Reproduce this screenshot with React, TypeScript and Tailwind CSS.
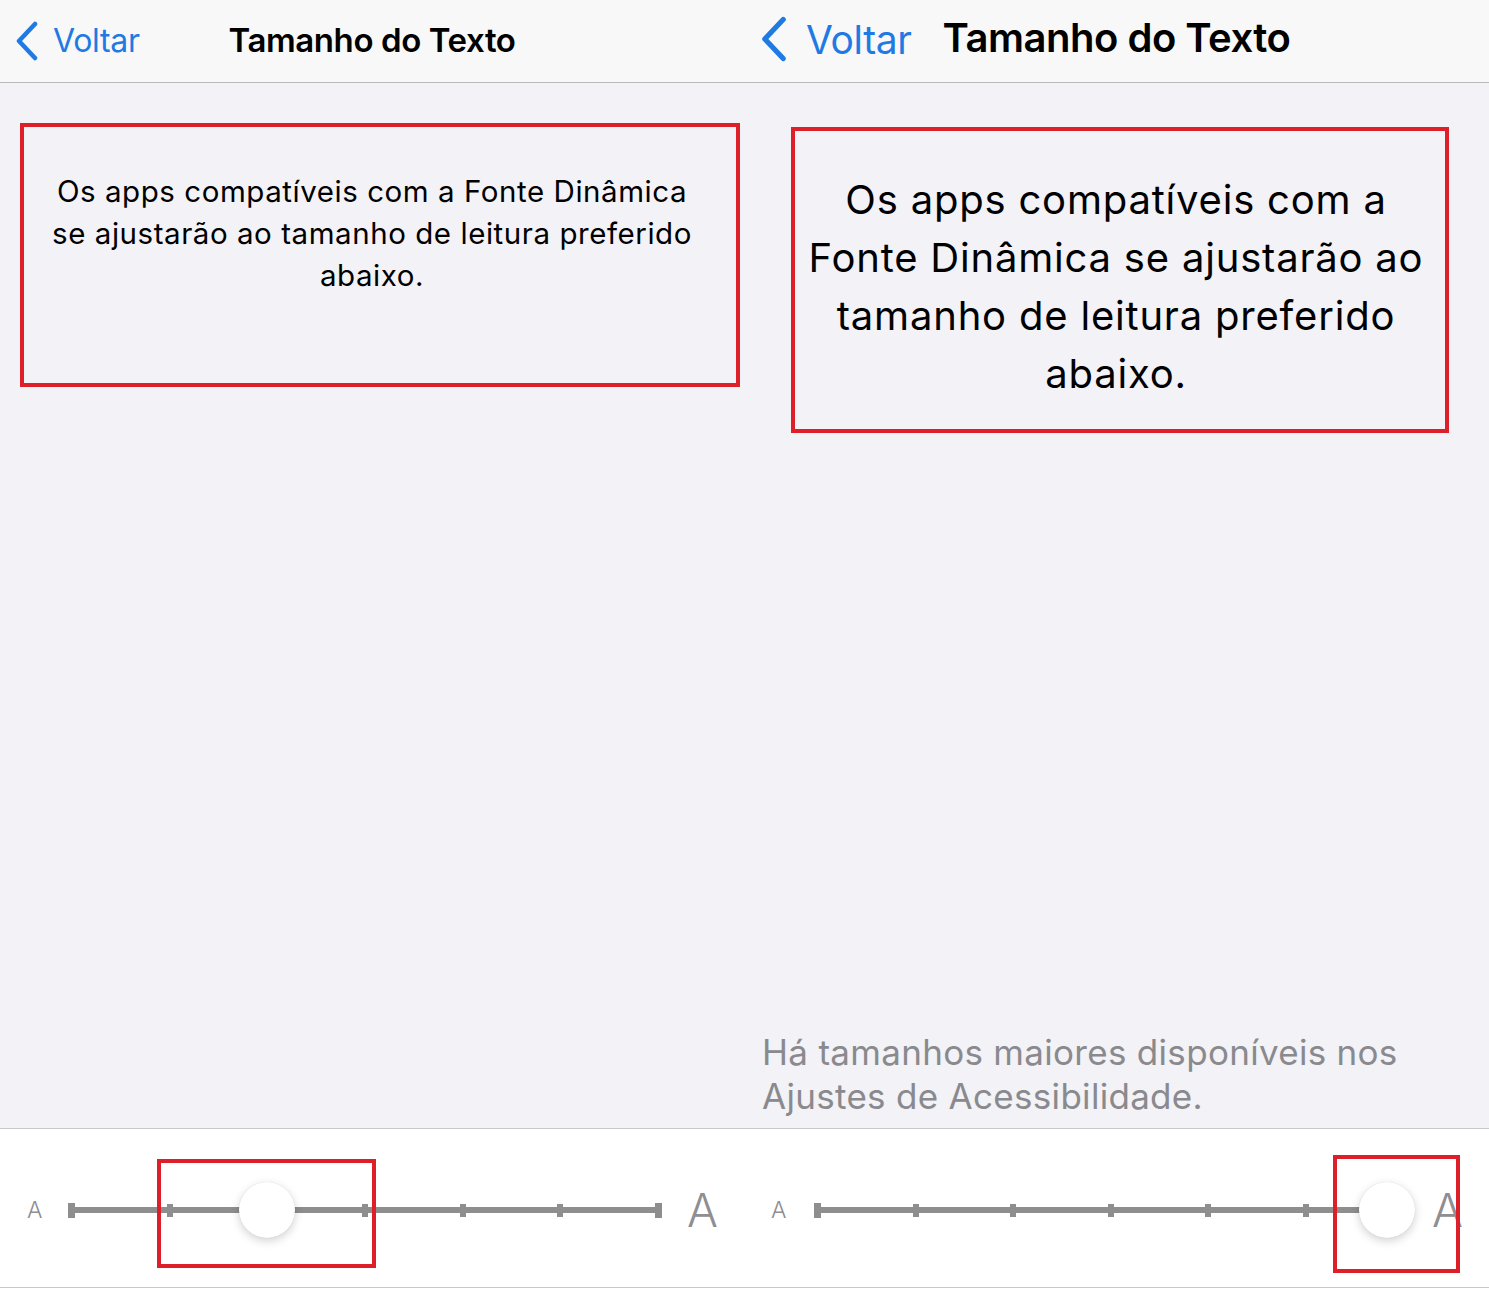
import React from "react";

const font = { fontFamily: "Inter, 'Noto Sans', sans-serif" };

function Chevron({ className }: { className?: string }) {
  return (
    <svg className={className} viewBox="0 0 24 40" fill="none" stroke="currentColor" strokeWidth={4.5} strokeLinecap="round" strokeLinejoin="round">
      <polyline points="20,3 4,20 20,37" />
    </svg>
  );
}

function Track({ positions }: { positions: number }) {
  const items: React.ReactNode[] = [];
  for (let i = 0; i < positions; i++) {
    const end = i === 0 || i === positions - 1;
    items.push(
      <div key={`t${i}`} className={end ? "w-[7px] h-[15px] bg-[#8e8e8e] shrink-0" : "w-[6px] h-[13px] bg-[#8e8e8e] shrink-0"} />
    );
    if (i < positions - 1) items.push(<div key={`s${i}`} className="flex-1 h-[6px] bg-[#8e8e8e]" />);
  }
  return <div className="flex items-center w-full">{items}</div>;
}

function Thumb() {
  return <div className="w-[56px] h-[56px] rounded-full bg-white shadow-[0_3px_10px_rgba(0,0,0,0.18),0_0_1px_rgba(0,0,0,0.15)]" />;
}

export default function App() {
  return (
    <div className="flex w-[1489px] h-[1291px] overflow-hidden bg-white" style={font}>
      {/* Left screen */}
      <section className="w-[744px] h-full flex flex-col">
        <header className="h-[83px] shrink-0 bg-[#f8f8f8] border-b border-[#b9b9bc] grid grid-cols-[1fr_auto_1fr] items-center">
          <div className="flex items-center pl-[15px] gap-[14px] text-[#1f7ae3]">
            <Chevron className="w-[24px] h-[40px]" />
            <span className="text-[32px] leading-none tracking-[-0.3px]">Voltar</span>
          </div>
          <h1 className="text-[33px] font-semibold text-black leading-none tracking-[-0.4px] -mt-[2px]">Tamanho do Texto</h1>
          <div />
        </header>

        <main className="flex-1 bg-[#f2f2f7] pt-[40px] pl-[20px]">
          <div className="w-[720px] h-[264px] border-[4px] border-[#dc1f28] pt-[43px] pr-[16px] text-center">
            <p className="text-[29.5px] leading-[42px] text-black tracking-[0.55px]">
              Os apps compatíveis com a Fonte Dinâmica
              <br />
              se ajustarão ao tamanho de leitura preferido
              <br />
              abaixo.
            </p>
          </div>
        </main>

        <div className="relative h-[160px] shrink-0 bg-white border-y border-[#c8c8cc] flex items-center pt-[4px]">
          <span className="w-[68px] pl-[27px] text-[23px] font-light text-[#8e8e93] leading-none">A</span>
          <div className="relative w-[594px]">
            <Track positions={7} />
            <div className="absolute left-[171px] top-1/2 -translate-y-1/2">
              <Thumb />
            </div>
          </div>
          <span className="pl-[25px] text-[46px] font-light text-[#8e8e93] leading-none">A</span>
          <div className="absolute left-[157px] top-[30px] w-[219px] h-[109px] border-[4px] border-[#dc1f28]" />
        </div>
        <div className="h-[3px] bg-white" />
      </section>

      {/* Right screen */}
      <section className="w-[745px] h-full flex flex-col">
        <header className="h-[83px] shrink-0 bg-[#f8f8f8] border-b border-[#b9b9bc] grid grid-cols-[1fr_auto_1fr] items-center">
          <div className="flex items-center pl-[16px] gap-[18px] text-[#1f7ae3] -mt-[4px]">
            <Chevron className="w-[28px] h-[46px]" />
            <span className="text-[39px] leading-none tracking-[-0.4px]">Voltar</span>
          </div>
          <h1 className="text-[40px] font-semibold text-black leading-none tracking-[-0.5px] -mt-[6px]">Tamanho do Texto</h1>
          <div />
        </header>

        <main className="flex-1 bg-[#f2f2f7] flex flex-col">
          <div className="pt-[44px] pl-[47px]">
            <div className="w-[658px] h-[306px] border-[4px] border-[#dc1f28] pt-[40px] pr-[8px] text-center">
              <p className="text-[40px] leading-[58px] text-black tracking-[0.8px]">
                Os apps compatíveis com a
                <br />
                Fonte Dinâmica se ajustarão ao
                <br />
                tamanho de leitura preferido
                <br />
                abaixo.
              </p>
            </div>
          </div>
          <p className="mt-auto pl-[18px] pb-[10px] text-[35px] leading-[44px] text-[#8a8a8e] tracking-[0.3px]">
            Há tamanhos maiores disponíveis nos
            <br />
            Ajustes de Acessibilidade.
          </p>
        </main>

        <div className="relative h-[160px] shrink-0 bg-white border-y border-[#c8c8cc] flex items-center pt-[4px]">
          <span className="w-[70px] pl-[27px] text-[23px] font-light text-[#8e8e93] leading-none">A</span>
          <div className="relative w-[593px]">
            <Track positions={7} />
            <div className="absolute left-[545px] top-1/2 -translate-y-1/2">
              <Thumb />
            </div>
          </div>
          <span className="pl-[25px] text-[46px] font-light text-[#8e8e93] leading-none">A</span>
          <div className="absolute left-[589px] top-[26px] w-[127px] h-[118px] border-[4px] border-[#dc1f28]" />
        </div>
        <div className="h-[3px] bg-white" />
      </section>
    </div>
  );
}
